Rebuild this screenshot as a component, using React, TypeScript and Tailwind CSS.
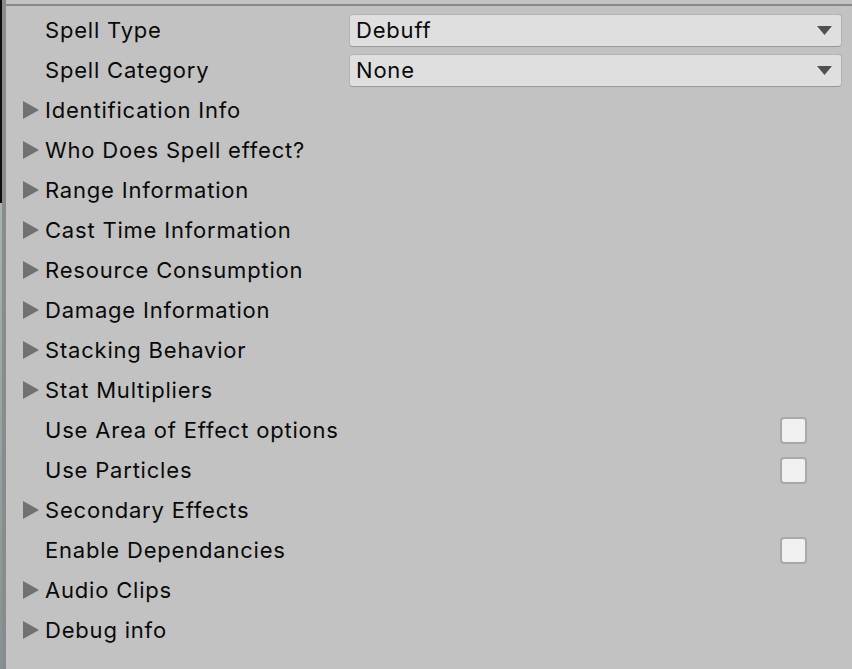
import React from 'react';

type Row =
  | { kind: 'enum'; label: string; value: string }
  | { kind: 'foldout'; label: string }
  | { kind: 'toggle'; label: string };

const rows: Row[] = [
  { kind: 'enum', label: 'Spell Type', value: 'Debuff' },
  { kind: 'enum', label: 'Spell Category', value: 'None' },
  { kind: 'foldout', label: 'Identification Info' },
  { kind: 'foldout', label: 'Who Does Spell effect?' },
  { kind: 'foldout', label: 'Range Information' },
  { kind: 'foldout', label: 'Cast Time Information' },
  { kind: 'foldout', label: 'Resource Consumption' },
  { kind: 'foldout', label: 'Damage Information' },
  { kind: 'foldout', label: 'Stacking Behavior' },
  { kind: 'foldout', label: 'Stat Multipliers' },
  { kind: 'toggle', label: 'Use Area of Effect options' },
  { kind: 'toggle', label: 'Use Particles' },
  { kind: 'foldout', label: 'Secondary Effects' },
  { kind: 'toggle', label: 'Enable Dependancies' },
  { kind: 'foldout', label: 'Audio Clips' },
  { kind: 'foldout', label: 'Debug info' },
];

const FoldArrow = () => (
  <svg width="16" height="18" viewBox="0 0 16 18" className="shrink-0">
    <polygon points="0,0 16,9 0,18" fill="#717171" />
  </svg>
);

const DropArrow = () => (
  <svg width="15" height="9" viewBox="0 0 15 9">
    <polygon points="0,0 15,0 7.5,9" fill="#505050" />
  </svg>
);

const InspectorRow = ({ row }: { row: Row }) => {
  return (
    <div className="flex h-[40px] items-center">
      <div className="flex w-[39px] justify-end pr-[6px]">
        {row.kind === 'foldout' && <FoldArrow />}
      </div>
      <div className="w-[304px] shrink-0 text-[22px] tracking-[0.8px] text-[#0a0a0a] whitespace-nowrap">{row.label}</div>
      {row.kind === 'enum' && (
        <div className="mr-[10px] flex h-[33px] flex-1 items-center justify-between rounded-[4px] border border-[#b4b4b4] border-b-[#999999] bg-[#dfdfdf] pl-[6px] pr-[9px]">
          <span className="text-[22px] tracking-[0.8px] text-[#0a0a0a]">{row.value}</span>
          <DropArrow />
        </div>
      )}
      {row.kind === 'toggle' && (
        <div className="ml-auto mr-[45px] h-[27px] w-[27px] rounded-[4px] border-2 border-[#a9a9a9] bg-[#f0f0f0]" />
      )}
    </div>
  );
};

export default function App() {
  return (
    <div
      className="flex h-[669px] w-[852px] overflow-hidden bg-[#c2c2c2]"
      style={{ fontFamily: 'Inter, "Noto Sans", sans-serif' }}
    >
      <div className="flex w-[2px] flex-col">
        <div className="h-[203px] bg-[#0d0d0d]" />
        <div className="flex-1 bg-gradient-to-b from-[#a3b5b0] to-[#7f9497]" />
      </div>
      <div className="w-[4px] bg-[#8b8b8b]" />
      <div className="flex-1 pt-[4px]">
        <div className="h-[2px] bg-[#8a8a8a]" />
        <div className="pt-[4px]">
          {rows.map((r) => (
            <InspectorRow key={r.label} row={r} />
          ))}
        </div>
      </div>
    </div>
  );
}
